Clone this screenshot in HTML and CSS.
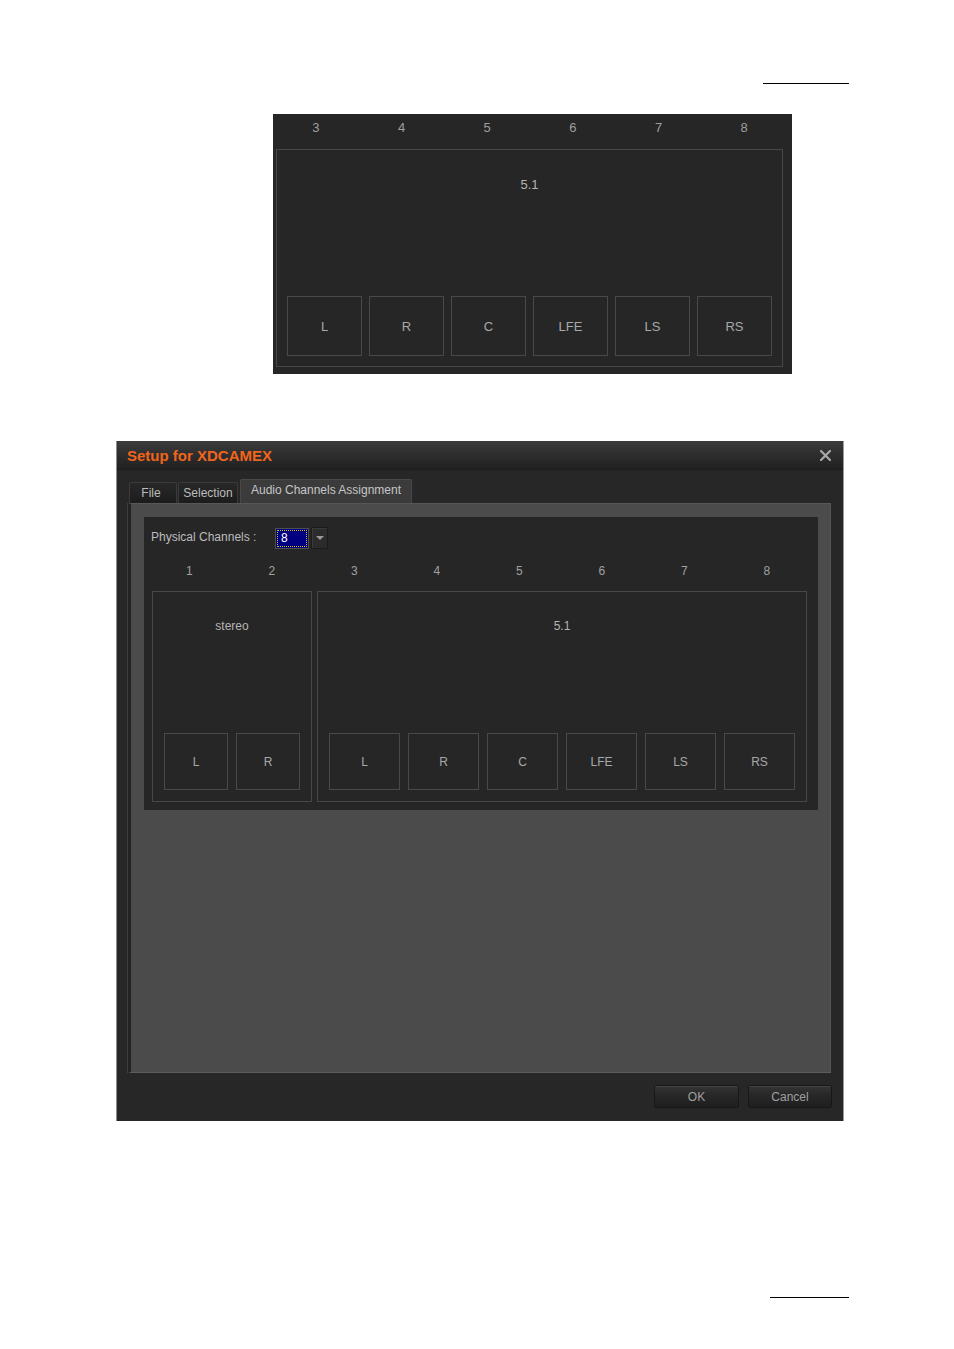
FILE: index.html
```html
<!DOCTYPE html>
<html>
<head>
<meta charset="utf-8">
<title>Setup for XDCAMEX</title>
<link rel="stylesheet" href="styles.css">
</head>
<body>
<div class="page">
  <div class="rule rule-top"></div>

  <div class="fig">
    <div class="fig-nums"><span>3</span><span>4</span><span>5</span><span>6</span><span>7</span><span>8</span></div>
    <div class="fig-box">
      <div class="grp-label">5.1</div>
      <div class="chan-row fig-row">
        <div class="chan">L</div><div class="chan">R</div><div class="chan">C</div><div class="chan">LFE</div><div class="chan">LS</div><div class="chan">RS</div>
      </div>
    </div>
  </div>

  <div class="dialog">
    <div class="titlebar">
      <span class="title">Setup for XDCAMEX</span>
      <svg class="close" width="11" height="11" viewBox="0 0 11 11"><path d="M1 1 L10 10 M10 1 L1 10" stroke="#a9a9a9" stroke-width="2.2" stroke-linecap="square"/></svg>
    </div>
    <div class="dlg-body">
      <div class="tabs">
        <div class="tab tab-file">File</div>
        <div class="tab tab-sel">Selection</div>
        <div class="tab tab-active">Audio Channels Assignment</div>
      </div>
      <div class="panel">
        <div class="group">
          <div class="pc-row">
            <span class="pc-label">Physical Channels :</span>
            <div class="combo-edit"><span class="combo-val">8</span></div>
            <div class="combo-btn"><svg width="8" height="5" viewBox="0 0 8 5"><path d="M0 0 H8 L4 4 Z" fill="#9a9a9a"/></svg></div>
          </div>
          <div class="nums"><span>1</span><span>2</span><span>3</span><span>4</span><span>5</span><span>6</span><span>7</span><span>8</span></div>
          <div class="boxes">
            <div class="abox abox-stereo">
              <div class="grp-label">stereo</div>
              <div class="chan-row">
                <div class="chan chan-s">L</div><div class="chan chan-s">R</div>
              </div>
            </div>
            <div class="abox abox-51">
              <div class="grp-label">5.1</div>
              <div class="chan-row">
                <div class="chan chan-m">L</div><div class="chan chan-m">R</div><div class="chan chan-m">C</div><div class="chan chan-m">LFE</div><div class="chan chan-m">LS</div><div class="chan chan-m">RS</div>
              </div>
            </div>
          </div>
        </div>
      </div>
      <div class="footer">
        <div class="btn btn-ok">OK</div>
        <div class="btn btn-cancel">Cancel</div>
      </div>
    </div>
  </div>

  <div class="rule rule-bottom"></div>
</div>
</body>
</html>
```

FILE: styles.css
```css
* { box-sizing: border-box; }
body {
  margin: 0;
  background: #ffffff;
  font-family: "Liberation Sans", Arial, sans-serif;
  font-size: 12px;
}
.page {
  width: 954px;
  height: 1349px;
  padding-top: 83px;
  overflow: hidden;
}
.rule { height: 1px; background: #000; }
.rule-top { margin-left: 763px; width: 86px; }
.rule-bottom { margin-left: 770px; width: 79px; margin-top: 176px; }

/* top figure */
.fig {
  margin: 30px 0 0 273px;
  width: 519px;
  height: 260px;
  background: #262626;
}
.fig-nums {
  display: grid;
  grid-template-columns: repeat(6, 1fr);
  width: 514px;
  height: 35px;
  padding-top: 6px;
  line-height: 16px;
  text-align: center;
  color: #9e9e9e;
  font-size: 13px;
}
.fig-box {
  margin-left: 3px;
  width: 507px;
  height: 218px;
  border: 1px solid #474747;
  display: flex;
  flex-direction: column;
  padding: 27px 10px 10px 10px;
}
.grp-label {
  text-align: center;
  line-height: 16px;
  color: #b4b4b4;
  font-size: 12px;
}
.fig-box .grp-label { font-size: 13px; }
.chan-row {
  margin-top: auto;
  display: flex;
  gap: 8px;
}
.fig-row { gap: 7px; }
.chan {
  width: 75px;
  height: 60px;
  border: 1px solid #494949;
  display: flex;
  align-items: center;
  justify-content: center;
  color: #a8a8a8;
  font-size: 13px;
}
.chan-s { width: 64px; height: 57px; font-size: 12px; }
.chan-m { width: 71px; height: 57px; font-size: 12px; }

/* dialog */
.dialog {
  margin: 67px 0 0 116px;
  width: 728px;
  height: 680px;
  background: #272727;
  border-left: 1px solid #8c8c8c;
  border-right: 1px solid #9a9a9a;
}
.titlebar {
  height: 29px;
  background: linear-gradient(#3b3b3b, #2c2c2c 55%, #212121);
  border-bottom: 1px solid #1d1d1d;
  display: flex;
  align-items: center;
  justify-content: space-between;
  padding: 0 12px 0 10px;
}
.title {
  color: #f0651c;
  font-weight: bold;
  font-size: 15px;
}
.close { display: block; }
.dlg-body { padding: 8px 11px 0 11px; }
.tabs {
  display: flex;
  align-items: flex-end;
  height: 25px;
  gap: 1px;
  padding-left: 1px;
}
.tab {
  height: 21px;
  border: 1px solid #3a3a3a;
  border-bottom: none;
  border-radius: 2px 2px 0 0;
  background: linear-gradient(#282828, #1c1c1c);
  color: #bcbcbc;
  display: flex;
  align-items: center;
  justify-content: center;
  font-size: 12px;
}
.tab-file { width: 48px; padding-right: 4px; }
.tab-sel { width: 60px; }
.tab-active {
  width: 172px;
  height: 24px;
  margin-left: 1px;
  background: #3b3b3b;
  border-color: #484848;
  color: #c6c6c6;
  padding-bottom: 3px;
}
.panel {
  width: 703px;
  height: 570px;
  background: #4b4b4b;
  border-top: 1px solid #575757;
  border-left: 3px solid #232323;
  border-right: 1px solid #555;
  border-bottom: 1px solid #5c5c5c;
  box-shadow: -1px 0 0 #3e3e3e;
  padding: 13px 12px 0 13px;
}
.group {
  height: 293px;
  background: #262626;
  padding: 10px 0 8px 0;
  display: flex;
  flex-direction: column;
}
.pc-row {
  display: flex;
  align-items: center;
  height: 22px;
  padding-left: 7px;
}
.pc-label {
  width: 124px;
  color: #bcbcbc;
  font-size: 12px;
  padding-bottom: 2px;
}
.combo-edit {
  width: 34px;
  height: 21px;
  border: 1px solid #4f4f4f;
  background: #000080;
  padding: 1px;
}
.combo-val {
  display: block;
  height: 100%;
  border: 1px dotted #d8c400;
  color: #ffffff;
  font-size: 12px;
  line-height: 15px;
  padding-left: 3px;
}
.combo-btn {
  margin-left: 2px;
  width: 17px;
  height: 22px;
  background: #2b2b2b;
  border: 1px solid #1b1b1b;
  box-shadow: inset 1px 1px 0 #3a3a3a;
  display: flex;
  align-items: center;
  justify-content: center;
}
.combo-btn svg { display: block; }
.nums {
  display: grid;
  grid-template-columns: repeat(8, 1fr);
  width: 660px;
  margin-left: 4px;
  height: 42px;
  padding-top: 14px;
  line-height: 16px;
  text-align: center;
  color: #a0a0a0;
  font-size: 12px;
}
.boxes {
  display: flex;
  gap: 5px;
  margin-left: 8px;
  height: 211px;
}
.abox {
  border: 1px solid #474747;
  padding: 26px 11px 11px 11px;
  display: flex;
  flex-direction: column;
}
.abox-stereo { width: 160px; }
.abox-51 { width: 490px; }

.footer {
  display: flex;
  justify-content: flex-end;
  gap: 9px;
  padding-top: 12px;
}
.btn {
  height: 23px;
  border: 1px solid #171717;
  border-radius: 2px;
  background: linear-gradient(#343434, #262626 50%, #1f1f1f);
  box-shadow: inset 0 1px 0 #444;
  color: #a0a0a0;
  display: flex;
  align-items: center;
  justify-content: center;
  font-size: 12px;
}
.btn-ok { width: 85px; }
.btn-cancel { width: 84px; }
```
